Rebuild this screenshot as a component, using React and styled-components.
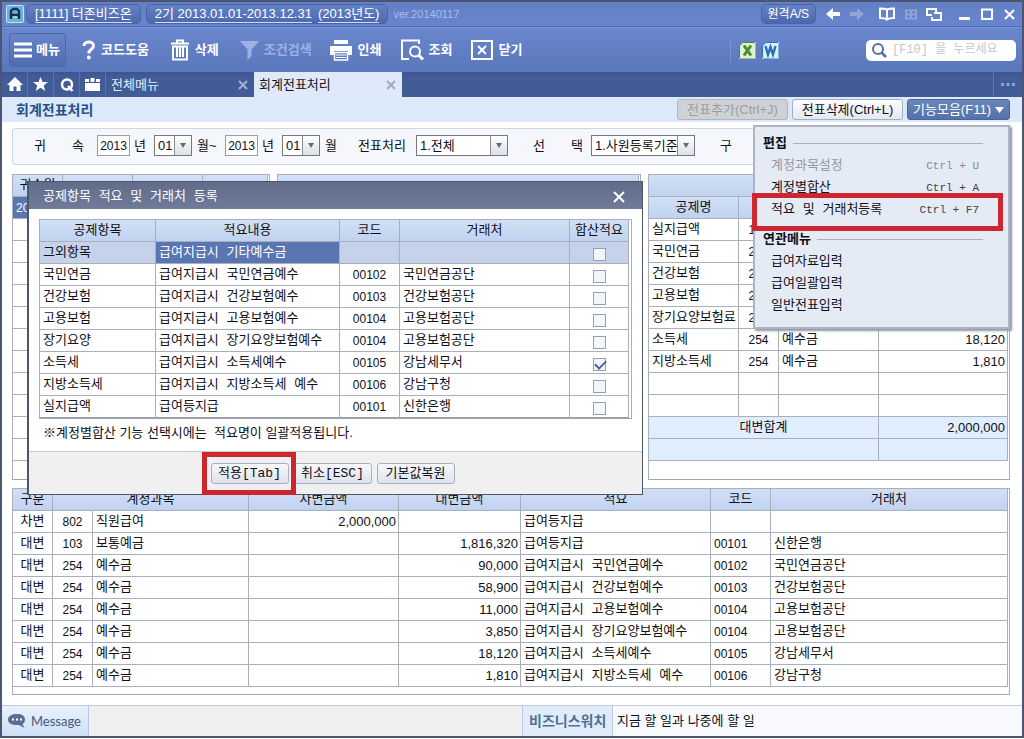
import React from "react";
import styled, { createGlobalStyle, css } from "styled-components";

const ui = `"Liberation Sans", "Noto Sans CJK KR", sans-serif`;
const mono = `"Liberation Mono", "Noto Sans CJK KR", monospace`;
const line = "#a9b0bb";

const Global = createGlobalStyle`
  * { box-sizing: border-box; }
  body { margin: 0; background: #fff; }
  button, input, select { font: inherit; color: inherit; margin: 0; }
  button { cursor: pointer; }
  p, h1, h2 { margin: 0; font: inherit; }
`;

const Page = styled.div`
  position: relative;
  min-height: 100vh;
  display: flex;
  flex-direction: column;
  padding-bottom: 1px;
  font: 13px/20px ${ui};
  color: #101018;
  white-space: pre;
`;
const Frame = styled.div`
  flex: 1;
  display: flex;
  flex-direction: column;
  border: 2px solid #4a5674;
  background: #fff;
`;
const Spacer = styled.div`
  flex: 1;
`;

/* ---------- title bar ---------- */
const TitleBar = styled.header`
  height: 25px;
  display: flex;
  align-items: center;
  padding: 0 1px 0 4px;
  color: #fff;
  background: linear-gradient(#6480c4, #6884cd);
  border-bottom: 1px solid #4d69b0;
`;
const Pill = styled.button`
  height: 20px;
  padding: 0 ${(p) => (p.$small ? 6 : 8)}px;
  margin-right: 5px;
  display: flex;
  align-items: center;
  gap: 6px;
  line-height: 16px;
  border: 1px solid #4a66aa;
  border-radius: 5px;
  background: linear-gradient(#6581c6, #4c69ae);
  font-size: ${(p) => (p.$small ? 12 : 13)}px;
  span { border-bottom: ${(p) => (p.$small ? 0 : 1)}px solid #cfdcf6; }
`;
const Logo = styled.svg`
  width: 18px;
  height: 18px;
  margin-right: 2px;
`;
const Version = styled.span`
  font-size: 11px;
  color: #a9bdeb;
`;
const IconButton = styled.button`
  display: flex;
  align-items: center;
  justify-content: center;
  width: ${(p) => p.$w || 24}px;
  height: 20px;
  padding: 0;
  border: 0;
  background: none;
  opacity: ${(p) => (p.disabled ? 0.28 : 1)};
`;

/* ---------- toolbar ---------- */
const Toolbar = styled.nav`
  height: 45px;
  display: flex;
  align-items: center;
  padding: 0 6px 0 7px;
  color: #fff;
  background: linear-gradient(#6a86ce, #5a77ba);
  border-top: 1px solid #7c95d6;
`;
const MenuButton = styled.button`
  height: 34px;
  width: 57px;
  padding: 0 4px;
  display: flex;
  align-items: center;
  gap: 4px;
  font-weight: 700;
  border: 1px solid #4d68a8;
  border-radius: 4px;
  background: linear-gradient(#6784ca, #4f6cb0);
`;
const Tool = styled.button`
  display: flex;
  align-items: center;
  gap: 5px;
  height: 34px;
  padding: 0;
  margin-left: ${(p) => p.$gap || 19}px;
  border: 0;
  background: none;
  font-weight: 700;
  color: ${(p) => (p.disabled ? "#9db1e4" : "#fff")};
`;
const OfficeTools = styled.div`
  display: flex;
  gap: 6px;
  align-items: center;
  height: 24px;
  padding-left: 8px;
  margin-right: 87px;
  border-left: 1px solid #7c94cf;
`;
const SearchBox = styled.label`
  display: flex;
  align-items: center;
  gap: 5px;
  width: 150px;
  height: 21px;
  padding: 0 5px;
  border-radius: 5px;
  background: #fff;
  input {
    width: 100%;
    min-width: 0;
    padding: 0;
    border: 0;
    outline: 0;
    background: none;
    font-family: ${mono};
    font-size: 12px;
  }
  input::placeholder { color: #c6c6c9; opacity: 1; }
`;

/* ---------- tabs ---------- */
const TabBar = styled.div`
  height: 25px;
  display: flex;
  background: linear-gradient(#3c5390, #425c97 4px);
`;
const QuickButton = styled.button`
  width: 26px;
  padding: 0;
  display: flex;
  align-items: center;
  justify-content: center;
  border: 0;
  border-right: 1px solid #5a72aa;
  background: none;
`;
const Tab = styled.div`
  width: 148px;
  display: flex;
  align-items: center;
  justify-content: space-between;
  padding: 0 6px 0 5px;
  color: ${(p) => (p.$active ? "#15151c" : "#e4ebfa")};
  background: ${(p) => (p.$active ? "#e0e9f9" : "none")};
  button { border: 0; background: none; padding: 0; display: flex; }
`;
const More = styled.button`
  width: 29px;
  padding: 0;
  border: 0;
  border-left: 1px solid #6279ae;
  background: none;
  display: flex;
  align-items: center;
  justify-content: center;
`;

/* ---------- page head ---------- */
const PageHead = styled.div`
  height: 25px;
  display: flex;
  align-items: center;
  gap: 4px;
  padding: 0 12px 0 14px;
  background: #dce9fa;
  h1 { flex: 1; font-size: 14px; font-weight: 700; color: #24528c; }
`;
const HeadButton = styled.button`
  height: 21px;
  padding: 0;
  width: ${(p) => p.$w || 111}px;
  line-height: 19px;
  display: flex;
  align-items: center;
  justify-content: center;
  gap: 4px;
  border-radius: 3px;
  border: 1px solid #a5afc2;
  background: linear-gradient(#fdfdff, #e3e8f1);
  color: #101018;
  ${(p) => p.disabled && css`
    border-color: #b3b7bd;
    background: #cfd2d5;
    color: #9a9da1;
  `}
  ${(p) => p.$primary && css`
    border-color: #4a659b;
    background: linear-gradient(#6a86b9, #5472ab);
    color: #fff;
  `}
`;
const MenuAnchor = styled.div`
  position: relative;
`;

/* ---------- filter ---------- */
const Content = styled.main`
  padding: 6px 12px 10px 10px;
`;
const Filter = styled.form`
  height: 37px;
  display: flex;
  align-items: center;
  padding: 0 0 2px 21px;
  margin-bottom: 9px;
  overflow: hidden;
  border: 1px solid #ccd6e4;
  border-radius: 3px;
  background: #f5f7fc;
`;
const Label = styled.label`
  width: ${(p) => p.$w}px;
  flex: none;
  display: flex;
  justify-content: ${(p) => (p.$spread ? "space-between" : "flex-start")};
  margin-right: ${(p) => p.$gap || 0}px;
`;
const Year = styled.input`
  width: 33px;
  height: 21px;
  flex: none;
  padding: 0;
  text-align: center;
  font-size: 12px !important;
  border: 1px solid #9a9ea6;
  background: #fff;
  margin-right: 4px;
`;
const Picker = styled.span`
  display: grid;
  flex: none;
  grid-template-columns: 1fr 17px;
  width: ${(p) => p.$w}px;
  height: 21px;
  margin-right: ${(p) => p.$gap}px;
  border: 1px solid #74777d;
  background: #fff;
  select {
    grid-area: 1 / 1 / 2 / 3;
    appearance: none;
    border: 0;
    padding: 0 0 0 3px;
    background: none;
    line-height: 17px;
    outline: 0;
  }
  i {
    grid-area: 1 / 2;
    pointer-events: none;
    display: flex;
    align-items: center;
    justify-content: center;
    border-left: 1px solid #8b8e94;
    background: linear-gradient(#fff, #dcdfe4);
  }
`;

/* ---------- grids ---------- */
const Panels = styled.div`
  display: grid;
  grid-template-columns: 258fr 364fr 362fr;
  gap: 7px;
  height: 306px;
  margin-bottom: 8px;
`;
const Panel = styled.section`
  border: 1px solid ${line};
  border-bottom-color: #a0a6b0;
  background: #fff;
  padding-right: 1px;
  padding-bottom: ${(p) => p.$pad || 0}px;
  overflow: hidden;
`;
const Grid = styled.table`
  width: 100%;
  table-layout: fixed;
  border-collapse: separate;
  border-spacing: 0;
  font-family: ${mono};
`;
const cell = css`
  height: 22px;
  padding: 1px 3px 0;
  line-height: 20px;
  overflow: hidden;
  border-right: 1px solid ${line};
  border-bottom: 1px solid ${line};
`;
const Th = styled.th`
  ${cell}
  font-weight: 400;
  text-align: center;
  background: linear-gradient(#d2e0f6, #bfd2f0);
`;
const Td = styled.td`
  ${cell}
  text-align: ${(p) => (p.$num === "amount" ? "right" : p.$center || p.$num ? "center" : "left")};
  padding: ${(p) => (p.$num === "amount" ? "1px 2px 0" : "1px 3px 0")};
  ${(p) => p.$num && css`font-family: ${ui};`}
  ${(p) => p.$num === "code" && css`font-size: 12px;`}
  ${(p) => p.$left && css`text-align: left;`}
  ${(p) => p.$tone === "row" && css`background: #c5d2ea;`}
  ${(p) => p.$tone === "sum" && css`background: #e0edfc;`}
  ${(p) => p.$tone === "on" && css`background: #5a76b2; color: #fff;`}
`;
const Check = styled.input`
  appearance: none;
  display: block;
  width: 13px;
  height: 13px;
  margin: 3px auto 0 !important;
  border: 1px solid #93a1b4;
  background: #f3f6f9;
  &:checked::after {
    content: "";
    display: block;
    width: 9px;
    height: 5px;
    margin: 1px;
    border: solid #4a62a3;
    border-width: 0 0 2px 2px;
    transform: rotate(-45deg);
  }
`;

/* ---------- floating menu ---------- */
const Dropdown = styled.div`
  position: absolute;
  z-index: 2;
  top: 26px;
  right: 0;
  width: 257px;
  height: 204px;
  padding: 4px 25px 0 8px;
  border: 2px solid #adb5c5;
  background: #e4ebf5;
  box-shadow: 2px 2px 2px #8d96a8;
  font-family: ${mono};
`;
const Group = styled.h2`
  display: flex;
  align-items: center;
  gap: 6px;
  height: 25px;
  margin-top: ${(p) => (p.$next ? 5 : 0)}px;
  font-weight: 700;
  &::after { content: ""; flex: 1; height: 1px; background: #a9b3c4; }
`;
const Item = styled.button`
  display: flex;
  justify-content: space-between;
  width: 100%;
  height: 22px;
  padding: 0 4px 0 8px;
  border: 0;
  background: none;
  color: ${(p) => (p.disabled ? "#9398a1" : "#101018")};
  kbd { font: 11px/20px ${mono}; color: ${(p) => (p.disabled ? "#858a93" : "#3b4049")}; }
`;
const Marker = styled.span`
  position: absolute;
  z-index: 3;
  pointer-events: none;
  border: 5px solid #cd2630;
`;
const MenuMarker = styled(Marker)`
  top: 66px;
  left: -3px;
  width: 251px;
  height: 38px;
`;
const ApplyMarker = styled(Marker)`
  inset: -11px -7px -11px -9px;
`;

/* ---------- dialog ---------- */
const Dialog = styled.div`
  position: absolute;
  z-index: 1;
  top: 181px;
  left: 27px;
  width: 616px;
  border: 1px solid #4e5665;
  border-left-width: 2px;
  background: #fff;
`;
const DialogTitle = styled.div`
  height: 27px;
  display: flex;
  align-items: center;
  justify-content: space-between;
  padding: 2px 17px 0 14px;
  color: #fff;
  font-family: ${mono};
  background: linear-gradient(#606c8a, #707b99);
  button { border: 0; padding: 0; background: none; display: flex; }
`;
const DialogBody = styled.div`
  padding: 10px 10px 8px;
  p { padding: 4px 4px 0; }
`;
const DialogPanel = styled(Panel)`
  padding-right: 2px;
  tbody tr:last-child td { border-bottom-color: #989ea8; }
`;
const DialogFoot = styled.div`
  height: 43px;
  display: flex;
  align-items: center;
  justify-content: center;
  gap: 5px;
  padding-right: 6px;
  border-top: 1px solid #c9cacc;
  background: #f0f0f0;
`;
const FootSlot = styled.span`
  position: relative;
`;
const FootButton = styled.button`
  display: block;
  width: 78px;
  height: 21px;
  padding: 0;
  line-height: 19px;
  font-family: ${mono};
  border: 1px solid #a8b0bf;
  border-radius: 3px;
  background: linear-gradient(#f7f8fb, #dde2ec);
`;

/* ---------- status bar ---------- */
const Status = styled.footer`
  flex: 1;
  min-height: 31px;
  display: flex;
  align-items: stretch;
  border-top: 1px solid #c3c9d1;
  background: #f0f0f0;
  line-height: 30px;
`;
const Message = styled.button`
  width: 87px;
  display: flex;
  align-items: center;
  gap: 5px;
  padding: 0 0 0 6px;
  border: 0;
  border-right: 1px solid #b9c6da;
  background: linear-gradient(#e9f1fc, #cfdff5);
  font: 13px Lato, sans-serif;
  color: #455a7b;
`;
const Watch = styled.strong`
  width: 91px;
  padding-left: 6px;
  font-size: 14px;
  color: #4f6f98;
  border: 1px solid #bccadb;
  border-width: 0 1px;
  background: #e0ecfa;
`;
const News = styled.span`
  flex: 0 1 409px;
  padding-left: 4px;
  background: #f7f9fc;
`;

/* ---------- icons ---------- */
const Svg = ({ w, h, children, ...p }) => (
  <svg width={w} height={h} viewBox={`0 0 ${w} ${h}`} fill="none" stroke="none" aria-hidden="true" {...p}>
    {children}
  </svg>
);
const Cross = ({ size = 11, color = "#fff", sw = 2 }) => (
  <Svg w={size} h={size}>
    <path d={`M1 1L${size - 1} ${size - 1}M${size - 1} 1L1 ${size - 1}`} stroke={color} strokeWidth={sw} />
  </Svg>
);
const Arrow = ({ right }) => (
  <Svg w={14} h={12}>
    <path d={right ? "M14 6L7 0V4H0V8H7V12Z" : "M0 6L7 0V4H14V8H7V12Z"} fill="#fff" />
  </Svg>
);
const Down = ({ color = "#66696f", w = 6, h = 5 }) => (
  <Svg w={w} h={h}><path d={`M0 0H${w}L${w / 2} ${h}Z`} fill={color} /></Svg>
);
const Office = ({ letter, dark, light }) => (
  <Svg w={17} h={17}>
    <path d="M4 0H17V17H0V4Z" fill={light} />
    <path d="M16.500 1V16.500H1" stroke={dark} strokeOpacity=".5" />
    <path d="M.5 16V4L4 .5H16" stroke={dark} />
    {letter === "X" ? (
      <path d="M5 3.500L12 13.500M12 3.500L5 13.500" stroke={dark} strokeWidth="3" />
    ) : (
      <path d="M3.500 4L6 12.500L8.500 5L11 12.500L13.500 4" stroke={dark} strokeWidth="2.400" />
    )}
  </Svg>
);

/* ---------- data ---------- */
const items = [
  ["그외항목", "급여지급시 기타예수금", "", ""],
  ["국민연금", "급여지급시 국민연금예수", "00102", "국민연금공단"],
  ["건강보험", "급여지급시 건강보험예수", "00103", "건강보험공단"],
  ["고용보험", "급여지급시 고용보험예수", "00104", "고용보험공단"],
  ["장기요양", "급여지급시 장기요양보험예수", "00104", "고용보험공단"],
  ["소득세", "급여지급시 소득세예수", "00105", "강남세무서", true],
  ["지방소득세", "급여지급시 지방소득세 예수", "00106", "강남구청"],
  ["실지급액", "급여등지급", "00101", "신한은행"],
];
const credits = [
  ["실지급액", "103", "", ""],
  ["국민연금", "254", "", ""],
  ["건강보험", "254", "", ""],
  ["고용보험", "254", "", ""],
  ["장기요양보험료", "254", "", ""],
  ["소득세", "254", "예수금", "18,120"],
  ["지방소득세", "254", "예수금", "1,810"],
  ["", "", "", ""],
  ["", "", "", ""],
];
const entries = [
  ["차변", "802", "직원급여", "2,000,000", "", "급여등지급", "", ""],
  ["대변", "103", "보통예금", "", "1,816,320", "급여등지급", "00101", "신한은행"],
  ["대변", "254", "예수금", "", "90,000", "급여지급시 국민연금예수", "00102", "국민연금공단"],
  ["대변", "254", "예수금", "", "58,900", "급여지급시 건강보험예수", "00103", "건강보험공단"],
  ["대변", "254", "예수금", "", "11,000", "급여지급시 고용보험예수", "00104", "고용보험공단"],
  ["대변", "254", "예수금", "", "3,850", "급여지급시 장기요양보험예수", "00104", "고용보험공단"],
  ["대변", "254", "예수금", "", "18,120", "급여지급시 소득세예수", "00105", "강남세무서"],
  ["대변", "254", "예수금", "", "1,810", "급여지급시 지방소득세 예수", "00106", "강남구청"],
];
const blank = (n) => Array.from({ length: n });

const Cols = ({ widths }) => (
  <colgroup>{widths.map((w, i) => <col key={i} width={w || undefined} />)}</colgroup>
);

const Select = ({ id, w, gap, value }) => (
  <Picker $w={w} $gap={gap}>
    <select id={id}><option>{value}</option></select>
    <i><Down /></i>
  </Picker>
);

function FilterBar() {
  return (
    <Filter>
      <Label htmlFor="y1" $w={50} $gap={13} $spread><span>귀</span><span>속</span></Label>
      <Year id="y1" defaultValue="2013" />
      <Label htmlFor="m1" $w={20}>년</Label>
      <Select id="m1" w={38} gap={5} value="01" />
      <Label htmlFor="y2" $w={28}>월~</Label>
      <Year id="y2" defaultValue="2013" />
      <Label htmlFor="m2" $w={20}>년</Label>
      <Select id="m2" w={38} gap={5} value="01" />
      <Label as="span" $w={33}>월</Label>
      <Label htmlFor="kind" $w={58}>전표처리</Label>
      <Select id="kind" w={92} gap={25} value="1.전체" />
      <Label htmlFor="pick" $w={50} $gap={8} $spread><span>선</span><span>택</span></Label>
      <Select id="pick" w={104} gap={25} value="1.사원등록기준" />
      <Label as="span" $w={12}>구</Label>
    </Filter>
  );
}

function FunctionMenu() {
  return (
    <Dropdown role="menu">
      <Group>편집</Group>
      <Item disabled>계정과목설정<kbd>Ctrl + U</kbd></Item>
      <Item>계정별합산<kbd>Ctrl + A</kbd></Item>
      <Item>적요 및 거래처등록<kbd>Ctrl + F7</kbd></Item>
      <Group $next>연관메뉴</Group>
      <Item>급여자료입력</Item>
      <Item>급여일괄입력</Item>
      <Item>일반전표입력</Item>
      <MenuMarker />
    </Dropdown>
  );
}

function DeductionDialog() {
  return (
    <Dialog role="dialog" aria-label="공제항목 적요 및 거래처 등록">
      <DialogTitle>
        <span>공제항목 적요 및 거래처 등록</span>
        <button aria-label="닫기"><Cross size={12} /></button>
      </DialogTitle>
      <DialogBody>
        <DialogPanel>
          <Grid>
            <Cols widths={[116, 184, 60, 170, 0]} />
            <thead>
              <tr>{["공제항목", "적요내용", "코드", "거래처", "합산적요"].map((h) => <Th key={h}>{h}</Th>)}</tr>
            </thead>
            <tbody>
              {items.map(([name, memo, code, client, on], i) => {
                const tone = i === 0 ? "row" : undefined;
                return (
                  <tr key={name}>
                    <Td $tone={tone}>{name}</Td>
                    <Td $tone={i === 0 ? "on" : undefined}>{memo}</Td>
                    <Td $num="code" $tone={tone}>{code}</Td>
                    <Td $tone={tone}>{client}</Td>
                    <Td $tone={tone}><Check type="checkbox" defaultChecked={!!on} aria-label={`${name} 합산적요`} /></Td>
                  </tr>
                );
              })}
            </tbody>
          </Grid>
        </DialogPanel>
        <p>※계정별합산 기능 선택시에는  적요명이 일괄적용됩니다.</p>
      </DialogBody>
      <DialogFoot>
        <FootSlot><FootButton>적용[Tab]</FootButton><ApplyMarker /></FootSlot>
        <FootButton>취소[ESC]</FootButton>
        <FootButton>기본값복원</FootButton>
      </DialogFoot>
    </Dialog>
  );
}

export default function App() {
  return (
    <Page>
      <Global />
      <Frame>
        <TitleBar>
          <Logo viewBox="0 0 18 18" aria-hidden="true">
            <rect x=".5" y=".5" width="17" height="17" rx="1" fill="#6bb5d8" stroke="#c6e4f3" />
            <path d="M5 14V6L7 4H11L13 6V14M5 10H13" stroke="#17324f" strokeWidth="2.400" fill="none" />
            <path d="M7 12H11" stroke="#e8f7ff" />
          </Logo>
          <Pill><span>[1111] 더존비즈온</span></Pill>
          <Pill><span>2기 2013.01.01-2013.12.31</span><span>(2013년도)</span></Pill>
          <Version>ver.20140117</Version>
          <Spacer />
          <Pill $small>원격A/S</Pill>
          <IconButton aria-label="뒤로"><Arrow /></IconButton>
          <IconButton aria-label="앞으로" disabled><Arrow right /></IconButton>
          <IconButton aria-label="도움말" $w={36}>
            <Svg w={16} h={14}><path d="M8 2.500C6 1.500 3 1.500 1 1.500V11C3 11 6 11 8 12.500C10 11 13 11 15 11V1.500C13 1.500 10 1.500 8 2.500V12.500" stroke="#fff" strokeWidth="2" /></Svg>
          </IconButton>
          <IconButton aria-label="바둑판" disabled $w={12}>
            <Svg w={13} h={11}><path d="M1 1H12V10H1ZM6.500 1V10M1 5.500H12" stroke="#fff" strokeWidth="2" /></Svg>
          </IconButton>
          <IconButton aria-label="창 배열" $w={34}>
            <Svg w={16} h={13}><path d="M6 7H1V1H10V4M8 5H15V12H6V9" stroke="#fff" strokeWidth="2" /></Svg>
          </IconButton>
          <IconButton aria-label="최소화" $w={26}><Svg w={11} h={12}><path d="M0 10.500H11" stroke="#fff" strokeWidth="3" /></Svg></IconButton>
          <IconButton aria-label="최대화" $w={20}><Svg w={12} h={12}><path d="M1 1.500H11V11H1Z" stroke="#fff" strokeWidth="2" /></Svg></IconButton>
          <IconButton aria-label="닫기" $w={24}><Cross /></IconButton>
        </TitleBar>

        <Toolbar>
          <MenuButton>
            <Svg w={18} h={16}><path d="M0 2H18M0 8H18M0 14H18" stroke="#fff" strokeWidth="3" /></Svg>메뉴
          </MenuButton>
          <Tool $gap={16}>
            <Svg w={14} h={20}><path d="M2 6C2 .8 11.500 .8 11.500 6C11.500 9.500 6.800 9 6.800 13.500" stroke="#fff" strokeWidth="3" /><circle cx="6.800" cy="17.500" r="1.900" fill="#fff" /></Svg>코드도움
          </Tool>
          <Tool $gap={21}>
            <Svg w={20} h={22}>
              <path d="M1 4.500H19M7 4V1.500H13V4" stroke="#fff" strokeWidth="2" />
              <path d="M3 7.500V20.500H17V7.500Z" stroke="#fff" strokeWidth="2" />
              <path d="M7 8V18M10 8V18M13 8V18" stroke="#fff" strokeWidth="2" />
            </Svg>삭제
          </Tool>
          <Tool disabled $gap={21}>
            <Svg w={19} h={19}><path d="M0 0H19L11.500 8.500V15L7.500 19V8.500Z" fill="#9db1e4" /></Svg>조건검색
          </Tool>
          <Tool $gap={17}>
            <Svg w={24} h={22}><path d="M5 1H19V5H5ZM1 7H23V16H19V12H5V16H1Z" fill="#fff" /><path d="M5.500 13.500H18.500V21H5.500Z" stroke="#fff" strokeWidth="1.500" /><path d="M7 16H17M7 18.500H17" stroke="#fff" /></Svg>인쇄
          </Tool>
          <Tool>
            <Svg w={23} h={22}><path d="M8 20H1V1.500H18V5" stroke="#fff" strokeWidth="2" /><circle cx="14" cy="12.500" r="5" stroke="#fff" strokeWidth="2" /><path d="M17.500 16L22 20.500" stroke="#fff" strokeWidth="3" /></Svg>조회
          </Tool>
          <Tool>
            <Svg w={22} h={20}><path d="M1 1H21V19H1ZM7 6L15 14M15 6L7 14" stroke="#fff" strokeWidth="2" /></Svg>닫기
          </Tool>
          <Spacer />
          <OfficeTools>
            <Office letter="X" dark="#478c34" light="#def3cd" />
            <Office letter="W" dark="#2770b4" light="#dbf0fd" />
          </OfficeTools>
          <SearchBox>
            <Svg w={16} h={16} style={{ flex: "none" }}><circle cx="7" cy="7" r="5" stroke="#566fa6" strokeWidth="2" /><path d="M10.500 10.500L15 15" stroke="#566fa6" strokeWidth="2.500" /></Svg>
            <input placeholder="[F10] 을 누르세요" aria-label="검색" />
          </SearchBox>
        </Toolbar>

        <TabBar>
          <QuickButton aria-label="홈"><Svg w={16} h={15}><path d="M8 0L16 8H13.500V14H9.500V9.500H6.500V14H2.500V8H0Z" fill="#fff" /></Svg></QuickButton>
          <QuickButton aria-label="즐겨찾기"><Svg w={15} h={15}><path d="M7.500 0L9.500 5H15L10.700 8.400L12.300 14L7.500 10.700L2.700 14L4.300 8.400L0 5H5.500Z" fill="#fff" /></Svg></QuickButton>
          <QuickButton aria-label="빠른 검색"><Svg w={14} h={14}><circle cx="7" cy="6.500" r="5" stroke="#fff" strokeWidth="2.500" /><path d="M8 8L12.500 13" stroke="#fff" strokeWidth="2.500" /></Svg></QuickButton>
          <QuickButton aria-label="모듈"><Svg w={15} h={13}><path d="M0 1H4V4H0ZM5.500 0H9.500V4H5.500ZM11 1H15V4H11ZM0 5H15V13H0Z" fill="#fff" /></Svg></QuickButton>
          <Tab>전체메뉴<button aria-label="전체메뉴 닫기"><Cross size={10} color="#a3b2d4" /></button></Tab>
          <Tab $active>회계전표처리<button aria-label="회계전표처리 닫기"><Cross size={10} color="#a3abba" /></button></Tab>
          <Spacer />
          <More aria-label="더 보기"><Svg w={14} h={3}><path d="M0 0H3V3H0ZM5.500 0H8.500V3H5.500ZM11 0H14V3H11Z" fill="#8fa1cb" /></Svg></More>
        </TabBar>

        <PageHead>
          <h1>회계전표처리</h1>
          <HeadButton disabled>전표추가(Ctrl+J)</HeadButton>
          <HeadButton>전표삭제(Ctrl+L)</HeadButton>
          <MenuAnchor>
            <HeadButton $primary $w={103} aria-haspopup="menu">기능모음(F11)<Down color="#fff" w={9} h={6} /></HeadButton>
            <FunctionMenu />
          </MenuAnchor>
        </PageHead>

        <Content>
          <FilterBar />
          <Panels>
            <Panel>
              <Grid>
                <Cols widths={[50, 70, 70, 0]} />
                <thead><tr><Th>귀속월</Th><Th /><Th /><Th /></tr></thead>
                <tbody>
                  <tr><Td $tone="on" $num="code" $left>2013</Td><Td $tone="on" /><Td $tone="on" /><Td $tone="on" /></tr>
                  {blank(11).map((_, i) => <tr key={i}><Td /><Td /><Td /><Td /></tr>)}
                </tbody>
              </Grid>
            </Panel>
            <Panel>
              <Grid>
                <thead><tr><Th /></tr></thead>
                <tbody>{blank(12).map((_, i) => <tr key={i}><Td /></tr>)}</tbody>
              </Grid>
            </Panel>
            <Panel>
              <Grid>
                <Cols widths={[90, 40, 100, 0]} />
                <thead>
                  <tr><Th colSpan={4} /></tr>
                  <tr><Th>공제명</Th><Th colSpan={2} /><Th /></tr>
                </thead>
                <tbody>
                  {credits.map(([name, code, account, sum], i) => (
                    <tr key={i}>
                      <Td>{name}</Td>
                      <Td $num="code">{code}</Td>
                      <Td>{account}</Td>
                      <Td $num="amount">{sum}</Td>
                    </tr>
                  ))}
                  <tr><Td colSpan={3} $center $tone="sum">대변합계</Td><Td $num="amount" $tone="sum">2,000,000</Td></tr>
                  <tr><Td colSpan={3} $tone="sum" /><Td $tone="sum" /></tr>
                </tbody>
              </Grid>
            </Panel>
          </Panels>
          <Panel $pad={7}>
            <Grid>
              <Cols widths={[40, 40, 156, 150, 122, 190, 60, 0]} />
              <thead>
                <tr>
                  <Th>구분</Th><Th colSpan={2}>계정과목</Th><Th>차변금액</Th><Th>대변금액</Th><Th>적요</Th><Th>코드</Th><Th>거래처</Th>
                </tr>
              </thead>
              <tbody>
                {entries.map(([side, code, account, debit, credit, memo, clientCode, client], i) => (
                  <tr key={i}>
                    <Td $center>{side}</Td>
                    <Td $num="code">{code}</Td>
                    <Td>{account}</Td>
                    <Td $num="amount">{debit}</Td>
                    <Td $num="amount">{credit}</Td>
                    <Td>{memo}</Td>
                    <Td $num="code" $left>{clientCode}</Td>
                    <Td>{client}</Td>
                  </tr>
                ))}
              </tbody>
            </Grid>
          </Panel>
        </Content>

        <Status>
          <Message>
            <Svg w={18} h={15}><path d="M9 0C14 0 17 2 17 5.500C17 8 16 9 14.500 10L16.500 14L11 11C5 11.500 0 10 0 5.500C0 2 4 0 9 0Z" fill="#5a6e94" /><path d="M4 4.500H6V6.500H4ZM8 4.500H10V6.500H8ZM12 4.500H14V6.500H12Z" fill="#fff" /></Svg>
            Message
          </Message>
          <Spacer />
          <Watch>비즈니스워치</Watch>
          <News>지금 할 일과 나중에 할 일</News>
        </Status>
      </Frame>
      <DeductionDialog />
    </Page>
  );
}
